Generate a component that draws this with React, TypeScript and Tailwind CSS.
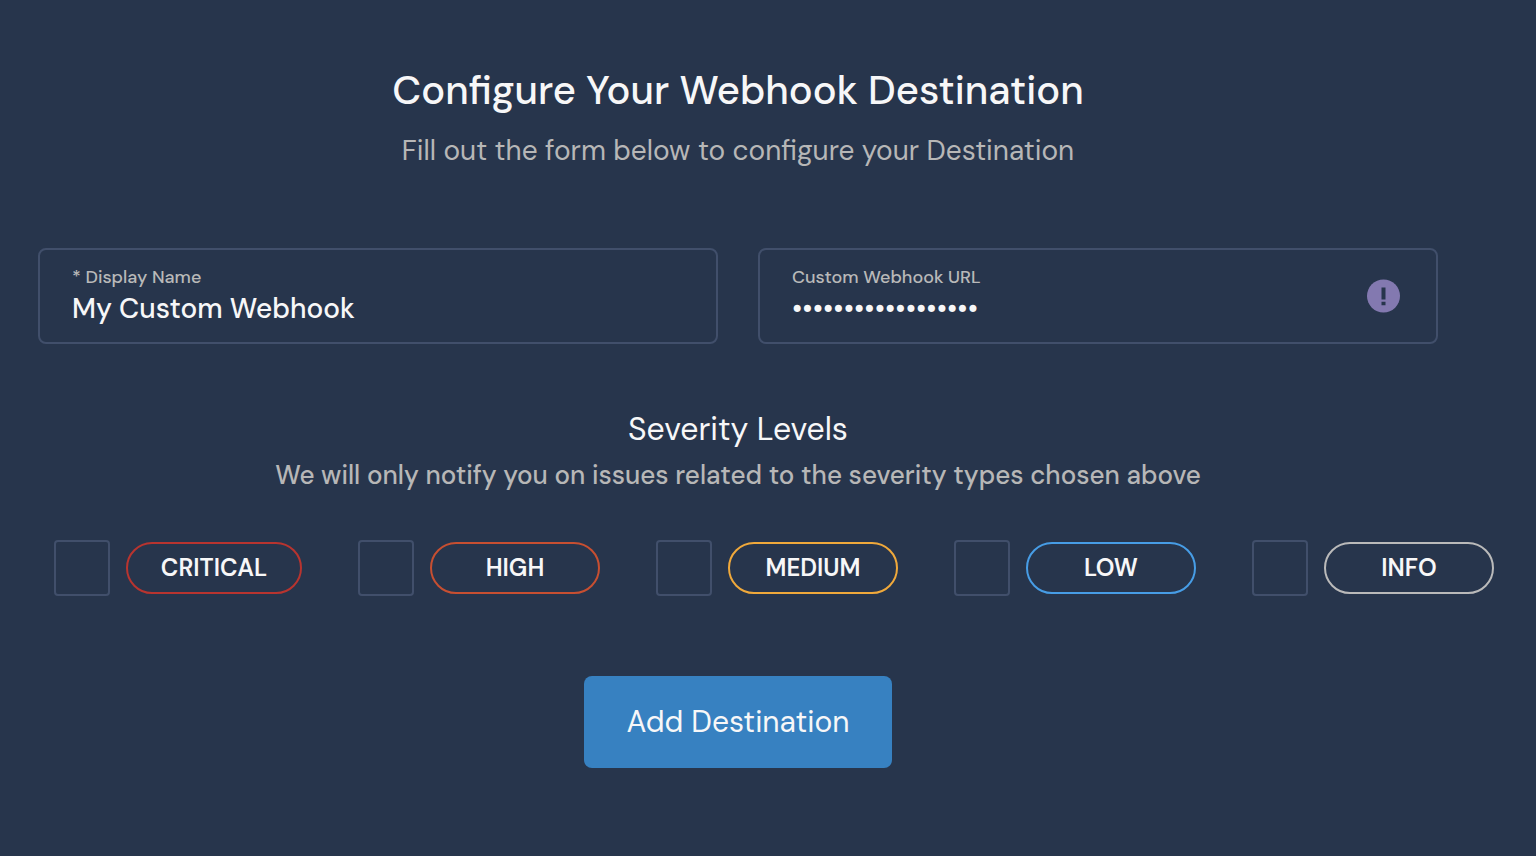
const levels = [
  { name: 'CRITICAL', pill: 'w-44 border-[#b8342f]' },
  { name: 'HIGH', pill: 'w-[170px] border-[#c74f31]' },
  { name: 'MEDIUM', pill: 'w-[170px] border-[#f0a93b]' },
  { name: 'LOW', pill: 'w-[170px] border-[#479de6]' },
  { name: 'INFO', pill: 'w-[170px] border-[#bababa]' },
];

function Field({ id, label, type, value, alert }: { id: string; label: string; type: string; value: string; alert?: boolean }) {
  return (
    <div className="flex h-24 min-w-0 flex-1 items-center rounded-lg border-2 border-[#414f6b] pr-9 pl-8">
      <div className="flex min-w-0 flex-1 flex-col pt-0.5">
        <label htmlFor={id} className="text-lg leading-6 font-medium text-[#b9b9b9]">{label}</label>
        <input
          id={id}
          type={type}
          defaultValue={value}
          className="h-10 w-full bg-transparent text-[28px] font-medium text-[#f7f7f8] outline-none"
        />
      </div>
      {alert && (
        <svg viewBox="0 0 34 34" className="size-[34px]" role="img" aria-label="Required">
          <circle cx="17.5" cy="17" r="16.5" fill="#8379b0" />
          <path d="M15.5 8.5h4v12h-4zM15.5 22.7h4v3.6h-4z" fill="#27354c" />
        </svg>
      )}
    </div>
  );
}

export default function App() {
  return (
    <main className="min-h-screen bg-[#27354c] pt-16 pb-22 font-['DM_Sans','Open_Sans',sans-serif] text-[#f7f7f8]">
      <form className="flex flex-col" onSubmit={(e) => e.preventDefault()}>
        <header className="mr-15 text-center">
          <h1 className="text-[40px] leading-[52px] font-medium">Configure Your Webhook Destination</h1>
          <p className="mt-4 text-[28px] leading-[38px] text-[#b7b7b7]">Fill out the form below to configure your Destination</p>
        </header>
        <div className="mt-[78px] mr-[98px] ml-[38px] flex gap-10">
          <Field id="name" label="* Display Name" type="text" value="My Custom Webhook" />
          <Field id="url" label="Custom Webhook URL" type="password" value="https://hook.site/" alert />
        </div>
        <div className="mt-16 mr-15 text-center">
          <h2 className="text-[32px] leading-[42px]">Severity Levels</h2>
          <p className="mt-2 text-[26px] leading-[34px] font-medium text-[#b7b7b7]">
            We will only notify you on issues related to the severity types chosen above
          </p>
        </div>
        <div className="mt-12 mr-[42px] ml-[54px] flex justify-between">
          {levels.map((l) => (
            <label key={l.name} className="flex items-center gap-4">
              <input type="checkbox" className="size-14 appearance-none rounded border-2 border-[#414f6b] checked:bg-[#3781c1]" />
              <span className={`flex h-[52px] items-center justify-center rounded-full border-2 text-2xl font-semibold ${l.pill}`}>{l.name}</span>
            </label>
          ))}
        </div>
        <div className="mt-20 mr-15 flex justify-center">
          <button type="submit" className="h-[92px] w-[308px] rounded-lg bg-[#3781c1] text-[30px] leading-10">Add Destination</button>
        </div>
      </form>
    </main>
  );
}
